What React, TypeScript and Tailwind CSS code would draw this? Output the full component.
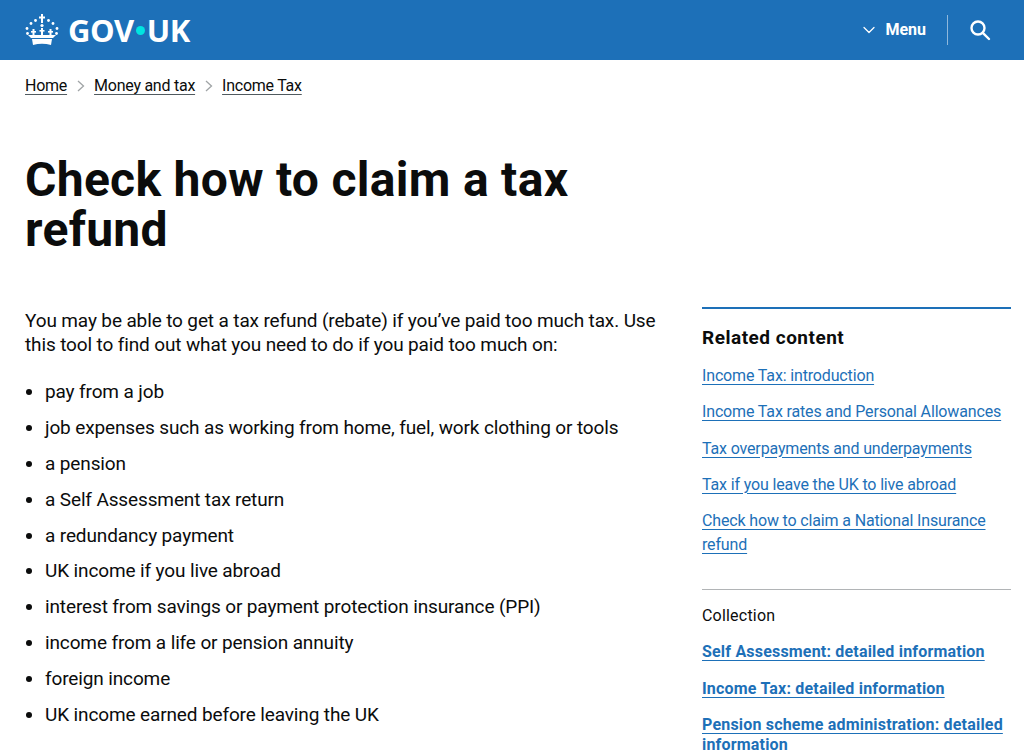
import React from "react";
import { ChevronDown } from "lucide-react";

const listItems = [
  "pay from a job",
  "job expenses such as working from home, fuel, work clothing or tools",
  "a pension",
  "a Self Assessment tax return",
  "a redundancy payment",
  "UK income if you live abroad",
  "interest from savings or payment protection insurance (PPI)",
  "income from a life or pension annuity",
  "foreign income",
  "UK income earned before leaving the UK",
];

const relatedLinks = [
  "Income Tax: introduction",
  "Income Tax rates and Personal Allowances",
  "Tax overpayments and underpayments",
  "Tax if you leave the UK to live abroad",
  "Check how to claim a National Insurance refund",
];

const collectionLinks = [
  "Self Assessment: detailed information",
  "Income Tax: detailed information",
  "Pension scheme administration: detailed information",
];

function Crown() {
  return (
    <svg width="34" height="32" viewBox="0 0 34 32" fill="white" className="shrink-0">
      <rect x="16" y="0" width="2" height="9" />
      <rect x="14" y="2.5" width="6" height="2" />
      <circle cx="10.5" cy="6.5" r="1.4" />
      <circle cx="23.5" cy="6.5" r="1.4" />
      <circle cx="6" cy="9.5" r="1.4" />
      <circle cx="28" cy="9.5" r="1.4" />
      <circle cx="17" cy="11.5" r="1.6" />
      <circle cx="2" cy="14.5" r="1.4" />
      <circle cx="32" cy="14.5" r="1.4" />
      <circle cx="2.5" cy="19.5" r="1.4" />
      <circle cx="31.5" cy="19.5" r="1.4" />
      <rect x="16" y="14" width="2" height="8" />
      <rect x="14.5" y="16" width="5" height="1.6" />
      <rect x="7.5" y="15" width="2" height="7" />
      <rect x="6" y="17" width="5" height="1.6" />
      <rect x="24.5" y="15" width="2" height="7" />
      <rect x="23" y="17" width="5" height="1.6" />
      <path d="M3 21 L31 21 L28 24 L6 24 Z" />
      <path d="M7 25 L27 25 L26 31 Q17 28.5 8 31 Z" />
    </svg>
  );
}

function Separator() {
  return (
    <span className="mx-[9px] w-[9px] flex justify-center text-[#a0a4a6]">
      <svg width="8" height="14" viewBox="0 0 8 14" fill="none" stroke="currentColor" strokeWidth="1.3">
        <path d="M1 2 L6.5 7 L1 12" />
      </svg>
    </span>
  );
}

export default function App() {
  return (
    <div className="h-[753px] overflow-hidden bg-white text-[#0b0c0c] font-['Roboto',sans-serif]">
      <header className="h-[60px] bg-[#1d70b8] flex items-center justify-between pl-[25px] pr-[33px] text-white">
        <div className="flex items-center gap-[9px]">
          <Crown />
          <span className="flex items-center text-[31px] font-bold leading-none font-['Open_Sans',sans-serif] tracking-[-0.5px]">
            GOV
            <span className="w-[9px] h-[9px] mx-[2px] rounded-full bg-[#00e5e0]" />
            UK
          </span>
        </div>
        <div className="flex items-center">
          <ChevronDown size={20} strokeWidth={1.5} className="mr-[6px]" />
          <span className="text-[16px] font-bold">Menu</span>
          <div className="w-px h-[30px] bg-[#8fb8dc] ml-[21px] mr-[21px]" />
          <svg width="22" height="22" viewBox="0 0 22 22" fill="none" stroke="currentColor" strokeWidth="2.4">
            <circle cx="9" cy="9" r="6.5" />
            <path d="M13.8 13.8 L20 20" strokeLinecap="round" />
          </svg>
        </div>
      </header>

      <nav className="flex items-center pl-[25px] pt-[15px] text-[16px] leading-[22px] tracking-[-0.25px]">
        <a className="underline underline-offset-[3px] decoration-[#505a5f]">Home</a>
        <Separator />
        <a className="underline underline-offset-[3px] decoration-[#505a5f]">Money and tax</a>
        <Separator />
        <a className="underline underline-offset-[3px] decoration-[#505a5f]">Income Tax</a>
      </nav>

      <main className="pl-[25px] pr-[13px]">
        <h1 className="mt-[58px] w-[630px] text-[48px] leading-[50px] font-bold tracking-[0.3px]">
          Check how to claim a tax refund
        </h1>

        <div className="mt-[50px] flex justify-between">
          <div className="w-[640px] pt-[4px]">
            <p className="text-[19px] leading-[24px] tracking-[-0.13px] mb-[22px]">
              You may be able to get a tax refund (rebate) if you’ve paid too much tax. Use this tool to find
              out what you need to do if you paid too much on:
            </p>
            <ul className="list-disc pl-[20px] text-[19px] leading-[25px] tracking-[-0.13px]">
              {listItems.map((item) => (
                <li key={item} className="mb-[10.9px]">
                  {item}
                </li>
              ))}
            </ul>
          </div>

          <aside className="w-[309px] mt-[2px]">
            <div className="border-t-2 border-[#1d70b8] pt-[16px] pb-[20px]">
              <h2 className="text-[19px] leading-[25px] font-bold tracking-[0.5px] mb-[14px]">Related content</h2>
              <ul className="text-[16px] leading-[24px] tracking-[-0.15px] text-[#1d70b8]">
                {relatedLinks.map((link) => (
                  <li key={link} className="mb-[12.3px]">
                    <a className="underline underline-offset-[3px]">{link}</a>
                  </li>
                ))}
              </ul>
            </div>
            <div className="border-t border-[#b1b4b6] pt-[14px]">
              <p className="text-[16px] leading-[24px] tracking-[0.2px] mb-[14px]">Collection</p>
              <ul className="text-[16px] leading-[20px] font-bold tracking-[0.19px] text-[#1d70b8]">
                {collectionLinks.map((link) => (
                  <li key={link} className="mb-[16.5px]">
                    <a className="underline underline-offset-[3px]">{link}</a>
                  </li>
                ))}
              </ul>
            </div>
          </aside>
        </div>
      </main>
    </div>
  );
}
